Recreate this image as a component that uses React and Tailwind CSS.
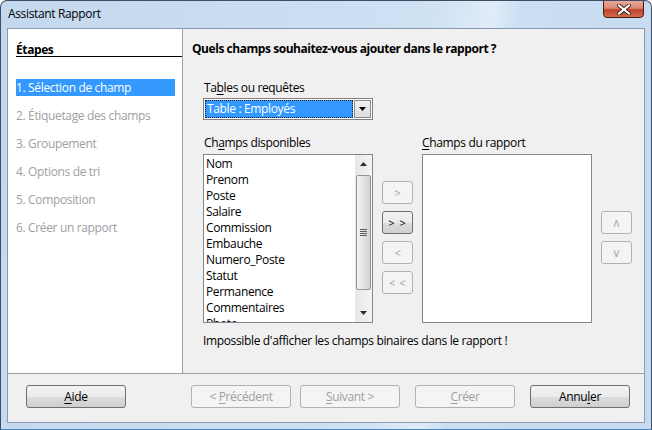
import React from "react";

const btnEnabled =
  "border-[#707070] bg-[linear-gradient(to_bottom,#f2f2f2_0%,#ebebeb_50%,#dddddd_50%,#cfcfcf_100%)] text-black";
const btnDisabled = "border-[#adb2b5] bg-[#f4f4f4] text-[#a0a0a0]";

function Btn({ children, disabled, className = "" }) {
  return (
    <div
      className={`h-[23px] rounded-[3px] border flex items-center justify-center shrink-0 ${
        disabled ? btnDisabled : btnEnabled
      } ${className}`}
    >
      <span className="whitespace-pre">{children}</span>
    </div>
  );
}

function U({ children }) {
  return <span className="underline underline-offset-2">{children}</span>;
}

const fields = [
  "Nom",
  "Prenom",
  "Poste",
  "Salaire",
  "Commission",
  "Embauche",
  "Numero_Poste",
  "Statut",
  "Permanence",
  "Commentaires",
  "Photo",
];

const steps = [
  "2. Étiquetage des champs",
  "3. Groupement",
  "4. Options de tri",
  "5. Composition",
  "6. Créer un rapport",
];

function CloseButton() {
  return (
    <div className="w-[41px] h-[18px] mt-[-1px] rounded-b-[4px] border border-[#4b1a12] bg-[linear-gradient(to_bottom,#e9a898_0%,#d98a74_45%,#c0432a_55%,#d26a4c_100%)] flex items-center justify-center">
      <svg width="14" height="11" viewBox="0 0 14 11">
        <path d="M2 1.5 L12 9.5 M12 1.5 L2 9.5" stroke="#3b2320" strokeWidth="4" strokeLinecap="square" />
        <path d="M2 1.5 L12 9.5 M12 1.5 L2 9.5" stroke="#ffffff" strokeWidth="2" strokeLinecap="square" />
      </svg>
    </div>
  );
}

function Scrollbar() {
  return (
    <div className="w-[17px] h-full bg-[linear-gradient(to_right,#e6e6e6,#f4f4f4)] flex flex-col items-center shrink-0">
      <div className="h-[18px] w-full flex items-center justify-center">
        <svg width="7" height="4" viewBox="0 0 7 4">
          <path d="M3.5 0 L7 4 L0 4 Z" fill="#2b2b2b" />
        </svg>
      </div>
      <div className="mt-[2px] w-[15px] h-[115px] rounded-[2px] border border-[#959595] bg-[linear-gradient(to_right,#f3f3f3,#e4e4e4_50%,#d1d1d1)] flex flex-col items-center justify-center gap-[1px]">
        <div className="w-[7px] h-[1px] bg-[#5a5a5a]" />
        <div className="w-[7px] h-[1px] bg-[#5a5a5a]" />
        <div className="w-[7px] h-[1px] bg-[#5a5a5a]" />
        <div className="w-[7px] h-[1px] bg-[#5a5a5a]" />
      </div>
      <div className="flex-1" />
      <div className="h-[18px] w-full flex items-center justify-center">
        <svg width="7" height="4" viewBox="0 0 7 4">
          <path d="M0 0 L7 0 L3.5 4 Z" fill="#2b2b2b" />
        </svg>
      </div>
    </div>
  );
}

export default function App() {
  return (
    <div className="w-[652px] h-[430px] rounded-t-[7px] border border-[#3e4d61] border-b-[#4a86c0] bg-[linear-gradient(100deg,#c3d8ee_0%,#cfe1f3_60%,#e0ecf8_68%,#cbdef2_72%,#c6dbf0_100%)] font-['Open_Sans',sans-serif] text-[12px] leading-[16px] tracking-[-0.35px] text-black overflow-hidden flex flex-col">
      {/* Title bar */}
      <div className="h-[27px] shrink-0 flex items-start justify-between pl-[7px] pr-[7px]">
        <span className="mt-[5px] text-black">Assistant Rapport</span>
        <CloseButton />
      </div>

      {/* Client area */}
      <div className="mx-[6px] h-[395px] border border-[#8b9bb0] bg-[#f0f0f0] flex flex-col shrink-0">
        <div className="h-[345px] flex border-b border-[#a0a0a0] shrink-0">
          {/* Steps panel */}
          <div className="w-[175px] bg-white border-r border-[#a0a0a0] flex flex-col shrink-0">
            <div className="ml-[8px] mt-[13px] h-[14px] border-b border-black box-content font-bold leading-[16px] tracking-[-0.4px]">
              Étapes
            </div>
            <div className="ml-[8px] mr-[7px] mt-[22px] h-[17px] bg-[#3399ff] text-white leading-[17px]">
              1. Sélection de champ
            </div>
            {steps.map((s) => (
              <div key={s} className="ml-[8px] mt-[11px] h-[17px] leading-[17px] text-[#a0a0a0]">
                {s}
              </div>
            ))}
          </div>

          {/* Content */}
          <div className="flex-1 flex flex-col pl-[9px]">
            <div className="mt-[12px] font-bold tracking-[-0.45px]">
              Quels champs souhaitez-vous ajouter dans le rapport ?
            </div>

            <div className="ml-[12px] mt-[23px]">
              Ta<U>b</U>les ou requêtes
            </div>
            <div className="ml-[11px] mt-[2px] w-[170px] h-[22px] border border-[#7f7f7f] bg-white flex items-center p-[1px]">
              <div className="flex-1 h-full bg-[#3399ff] border border-dotted border-[#1a1a1a] text-white flex items-center pl-[1px] leading-[16px]">
                Table : Employés
              </div>
              <div className="w-[17px] h-full ml-[1px] border border-[#8a8a8a] bg-[linear-gradient(to_bottom,#f2f2f2,#dcdcdc)] flex items-center justify-center">
                <svg width="7" height="4" viewBox="0 0 7 4">
                  <path d="M0 0 L7 0 L3.5 4 Z" fill="#000" />
                </svg>
              </div>
            </div>

            <div className="ml-[11px] mt-[15px] flex">
              {/* Available fields */}
              <div className="flex flex-col w-[170px] shrink-0">
                <div className="ml-[1px]">
                  Ch<U>a</U>mps disponibles
                </div>
                <div className="mt-[3px] h-[169px] border border-[#828790] bg-white flex overflow-hidden">
                  <div className="flex-1 pl-[2px] pt-[1px] overflow-hidden">
                    {fields.map((f) => (
                      <div key={f} className="h-[16px] leading-[16px] whitespace-nowrap">
                        {f}
                      </div>
                    ))}
                  </div>
                  <Scrollbar />
                </div>
              </div>

              {/* Move buttons */}
              <div className="ml-[9px] w-[31px] flex flex-col gap-[7px] pt-[46px] shrink-0 text-[11px]">
                <Btn disabled className="w-[31px]">&gt;</Btn>
                <Btn className="w-[31px] text-[#10204a] tracking-[1px]">&gt; &gt;</Btn>
                <Btn disabled className="w-[31px]">&lt;</Btn>
                <Btn disabled className="w-[31px] tracking-[0.5px]">&lt; &lt;</Btn>
              </div>

              {/* Report fields */}
              <div className="ml-[9px] flex flex-col w-[170px] shrink-0">
                <div>
                  <U>C</U>hamps du rapport
                </div>
                <div className="mt-[3px] h-[169px] border border-[#828790] bg-white" />
              </div>

              <div className="ml-[9px] w-[31px] flex flex-col gap-[7px] pt-[76px] shrink-0 font-['DejaVu_Sans',sans-serif] text-[12px] tracking-normal">
                <Btn disabled className="w-[31px] text-[#b0b0b0]">∧</Btn>
                <Btn disabled className="w-[31px] text-[#b0b0b0]">∨</Btn>
              </div>
            </div>

            <div className="ml-[11px] mt-[10px]">Impossible d'afficher les champs binaires dans le rapport !</div>
          </div>
        </div>

        {/* Bottom buttons */}
        <div className="flex items-start pt-[11px] pl-[18px]">
          <Btn className="w-[100px]">
            <U>A</U>ide
          </Btn>
          <Btn disabled className="w-[100px] ml-[65px]">
            {"< "}
            <U>P</U>récédent
          </Btn>
          <Btn disabled className="w-[100px] ml-[9px]">
            <U>S</U>uivant &gt;
          </Btn>
          <Btn disabled className="w-[100px] ml-[15px]">
            <U>C</U>réer
          </Btn>
          <Btn className="w-[100px] ml-[15px]">
            Annu<U>l</U>er
          </Btn>
        </div>
      </div>
    </div>
  );
}
